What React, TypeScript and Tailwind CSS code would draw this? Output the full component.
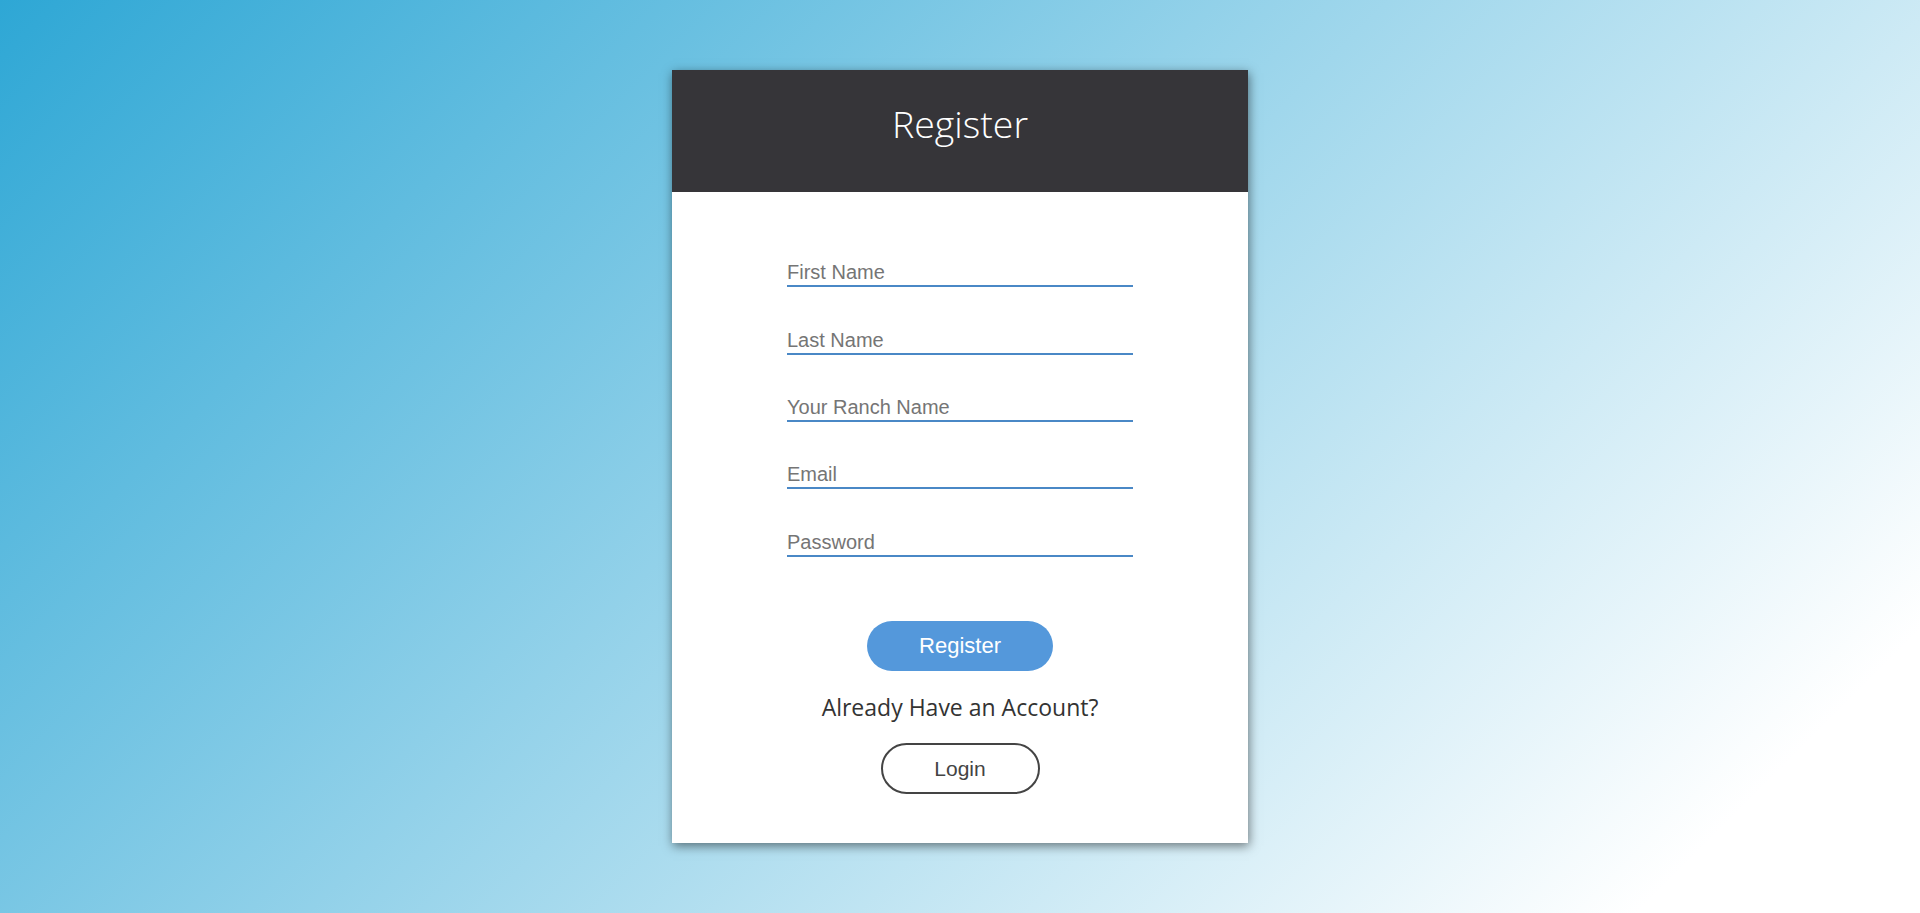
import React from 'react';

const fields = ['First Name', 'Last Name', 'Your Ranch Name', 'Email', 'Password'];

const App: React.FC = () => {
  return (
    <div className="min-h-screen w-full flex items-center justify-center bg-[linear-gradient(135deg,#2ea7d5_0%,#ffffff_90%)]">
      <div className="w-[576px] bg-white shadow-[1px_3px_10px_rgba(0,0,0,0.5)]">
        {/* Header */}
        <div className="h-[122px] bg-[#363539] flex justify-center pt-[28px]">
          <h1 className="text-[37.5px] leading-[52px] font-light text-white font-['Open_Sans',sans-serif]">
            Register
          </h1>
        </div>

        {/* Form */}
        <form className="flex flex-col items-center pt-[68px] pb-[49px]" onSubmit={(e) => e.preventDefault()}>
          <div className="w-[346px] flex flex-col gap-[40.4px]">
            {fields.map((field) => (
              <input
                key={field}
                type={field === 'Password' ? 'password' : field === 'Email' ? 'email' : 'text'}
                placeholder={field}
                className="block w-full h-[27px] p-0 leading-[23px] text-[20px] font-['Liberation_Sans',Arial,sans-serif] text-[#333] placeholder:text-[#757575] border-b-2 border-[#4a88c6] outline-none bg-transparent"
              />
            ))}
          </div>

          <button
            type="submit"
            className="mt-[64px] w-[186px] h-[50px] rounded-full bg-[#5498db] text-white text-[22px] font-['Liberation_Sans',Arial,sans-serif]"
          >
            Register
          </button>

          <p className="mt-[20px] h-[32px] leading-[32px] text-[23px] text-[#333] font-['Open_Sans',sans-serif]">
            Already Have an Account?
          </p>

          <button
            type="button"
            className="mt-[20px] w-[159px] h-[51px] rounded-full border-2 border-[#444] text-[#444] text-[21px] bg-white font-['Liberation_Sans',Arial,sans-serif]"
          >
            Login
          </button>
        </form>
      </div>
    </div>
  );
};

export default App;
